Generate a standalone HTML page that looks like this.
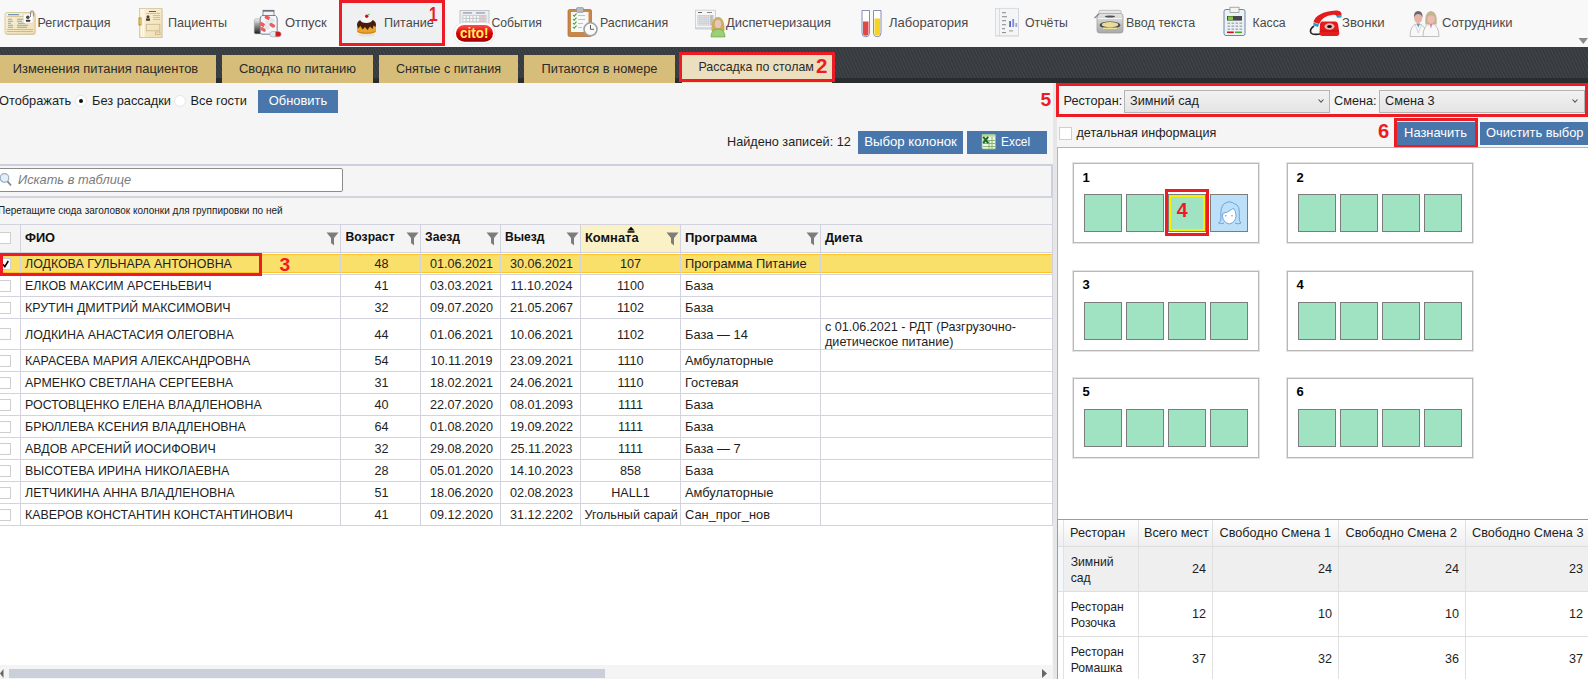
<!DOCTYPE html>
<html><head><meta charset="utf-8">
<style>
*{margin:0;padding:0;box-sizing:border-box;}
html,body{width:1588px;height:681px;overflow:hidden;background:#f5f5f5;font-family:"Liberation Sans",sans-serif;color:#1e1e1e;}
.a{position:absolute;white-space:nowrap;}
#top{position:absolute;left:0;top:0;width:1588px;height:47px;background:#f8f8f8;}
.tl{position:absolute;top:15px;font-size:12.7px;color:#4a4a4a;line-height:16px;}
#band{position:absolute;left:0;top:47px;width:1588px;height:36px;background:#35393e;
 }
#bandb{position:absolute;left:0;top:78px;width:1588px;height:5px;background:#2a2d30;}
.tab{position:absolute;top:55px;height:28px;background:#d6bd79;font-size:12.9px;color:#2a2a2a;line-height:28px;text-align:center;}
.btn{position:absolute;background:#4a77ab;color:#fff;font-size:12.9px;text-align:center;}
.red{position:absolute;border:3px solid #ed1c24;}
.rn{position:absolute;color:#ed1c24;font-weight:bold;font-size:19px;line-height:19px;}
#grid{position:absolute;left:0;top:225px;width:1053px;}
.hl{position:absolute;height:1px;background:#d3d3df;}
.vl{position:absolute;width:1px;background:#d3d3df;}
.cell{position:absolute;font-size:12.6px;line-height:15px;color:#1e1e1e;}
.hd{position:absolute;font-size:12.4px;font-weight:bold;color:#111;line-height:15px;}
.fil{position:absolute;width:12px;height:13px;}
.cb{position:absolute;width:12px;height:12px;background:#fff;border:1px solid #cfcfcf;}
.tbox{position:absolute;width:186px;height:80px;border:1px solid #b8b8b8;box-shadow:0 0 0 1px #e4e4e4;background:#fff;}
.tnum{position:absolute;left:8px;top:8px;font-size:13px;font-weight:bold;color:#000;}
.seat{position:absolute;width:38px;height:38px;background:#a0e2c2;border:1px solid #7c7c7c;}
</style></head>
<body>
<div id="top"></div>
<div class="red" style="left:339px;top:0;width:106px;height:46px;background:#eff0f2;"></div>
<div class="tl a" style="left:37.5px;font-size:12.5px">Регистрация</div>
<div class="tl a" style="left:168px;font-size:12.6px">Пациенты</div>
<div class="tl a" style="left:285px;font-size:13.0px">Отпуск</div>
<div class="tl a" style="left:384px;font-size:12.6px">Питание</div>
<div class="tl a" style="left:491.5px;font-size:12.2px">События</div>
<div class="tl a" style="left:600px;font-size:12.4px">Расписания</div>
<div class="tl a" style="left:726px;font-size:12.9px">Диспетчеризация</div>
<div class="tl a" style="left:889px;font-size:13.0px">Лаборатория</div>
<div class="tl a" style="left:1025px;font-size:12.3px">Отчёты</div>
<div class="tl a" style="left:1126px;font-size:12.5px">Ввод текста</div>
<div class="tl a" style="left:1252.5px;font-size:12.3px">Касса</div>
<div class="tl a" style="left:1342px;font-size:13.2px">Звонки</div>
<div class="tl a" style="left:1442px;font-size:13px">Сотрудники</div>
<div class="rn a" style="left:428.6px;top:4.6px;font-size:19.4px;line-height:19.4px;transform:scaleX(0.8);transform-origin:left top;">1</div>
<svg class="a" style="left:0;top:0" width="1588" height="47" viewBox="0 0 1588 47">
<defs>
<linearGradient id="gcream" x1="0" y1="0" x2="1" y2="1"><stop offset="0" stop-color="#fbf1d8"/><stop offset="1" stop-color="#f0deb0"/></linearGradient>
<linearGradient id="gred" x1="0" y1="0" x2="0" y2="1"><stop offset="0" stop-color="#ff5050"/><stop offset="0.5" stop-color="#dd0000"/><stop offset="1" stop-color="#a00000"/></linearGradient>
<linearGradient id="ggray" x1="0" y1="0" x2="0" y2="1"><stop offset="0" stop-color="#e6e6e6"/><stop offset="1" stop-color="#a8a8a8"/></linearGradient>
<linearGradient id="gblk" x1="0" y1="0" x2="0" y2="1"><stop offset="0" stop-color="#d8d8d8"/><stop offset="1" stop-color="#202020"/></linearGradient>
</defs>
<!-- 1 registration card -->
<rect x="5.5" y="13.5" width="30" height="21.5" rx="2" fill="#b9b2a4" opacity="0.6"/>
<rect x="5" y="12.5" width="30" height="21.5" rx="2" fill="url(#gcream)" stroke="#d3c294" stroke-width="0.8"/>
<rect x="8" y="14.2" width="11" height="1" fill="#4f86ad"/>
<rect x="7" y="16.3" width="26" height="0.8" fill="#cbb88c"/>
<g fill="#5f92b8" opacity="0.8"><rect x="8" y="18.8" width="4" height="0.9"/><rect x="17" y="18.8" width="6" height="0.9"/>
<rect x="8" y="20.8" width="5" height="0.9"/><rect x="17" y="20.8" width="5" height="0.9"/>
<rect x="8" y="22.8" width="3" height="0.9"/><rect x="18" y="22.8" width="7" height="0.9"/>
<rect x="8" y="24.8" width="5" height="0.9"/><rect x="17" y="24.8" width="11" height="0.9"/>
<rect x="8" y="26.8" width="5" height="0.9"/><rect x="17" y="26.8" width="10" height="0.9"/></g>
<rect x="7" y="29" width="26" height="0.9" fill="#c9b68a"/><rect x="7" y="31" width="26" height="0.9" fill="#c9b68a"/>
<rect x="23.5" y="14" width="9.5" height="9" fill="#fff" stroke="#d8d8d8" stroke-width="0.6"/>
<circle cx="27.8" cy="17.3" r="1.8" fill="#4a4a4a"/><rect x="25.8" y="19.8" width="4.6" height="2" rx="0.8" fill="#3a3a3a"/>
<path d="M30.5 17 V12.5 a1.6 1.6 0 0 1 3.2 0 V16.5" fill="none" stroke="#7c7c7c" stroke-width="0.9"/>
<!-- 2 patients doc -->
<rect x="140" y="9" width="22.5" height="29" fill="#bcb39f" opacity="0.5"/>
<rect x="139.5" y="8.5" width="22.5" height="29" fill="url(#gcream)" stroke="#d0be92" stroke-width="0.7"/>
<rect x="141.3" y="9" width="1" height="28" fill="#fff"/><rect x="143.3" y="9" width="1" height="28" fill="#fff"/>
<rect x="139" y="18" width="2" height="7" fill="none" stroke="#b8860b" stroke-width="0.9"/>
<rect x="149" y="11" width="7" height="1" fill="#6a5a40"/>
<rect x="146" y="13.2" width="14" height="0.8" fill="#c8b58c"/>
<circle cx="148" cy="16.8" r="1.5" fill="#4a4030"/><rect x="146" y="18.4" width="4" height="2.4" fill="#4a4030"/>
<g fill="#c8b58c"><rect x="153" y="15" width="7" height="0.8"/><rect x="153" y="17" width="7" height="0.8"/><rect x="153" y="19" width="7" height="0.8"/></g>
<rect x="146.3" y="24.3" width="13.5" height="6.5" fill="none" stroke="#c8b58c" stroke-width="0.8"/>
<rect x="155.5" y="32" width="4.5" height="2.6" fill="none" stroke="#c8b58c" stroke-width="0.8"/>
<!-- 3 pills -->
<linearGradient id="gcap" x1="0" y1="0" x2="0" y2="1"><stop offset="0" stop-color="#f0f0f0"/><stop offset="0.45" stop-color="#9a9a9a"/><stop offset="1" stop-color="#151515"/></linearGradient>
<rect x="254.3" y="18.8" width="7" height="15" rx="1.6" fill="url(#gcap)" stroke="#888" stroke-width="0.4"/>
<g stroke="#555" stroke-width="0.35" opacity="0.7"><path d="M255 24 H261"/><path d="M255 26 H261"/><path d="M255 28 H261"/><path d="M255 30 H261"/><path d="M255 32 H261"/></g>
<path d="M262 15.5 Q260.2 16.5 260.2 19 V32.5 Q260.2 34.2 262 34.2 H275.4 Q277.2 34.2 277.2 32.5 V19 Q277.2 16.5 275.4 15.5 Z" fill="#f4f6f8" stroke="#6c7486" stroke-width="0.9"/>
<rect x="263" y="10.3" width="11" height="5.2" fill="#f2f4f6" stroke="#6c7486" stroke-width="0.8"/>
<rect x="263" y="10.3" width="11" height="1.3" fill="#5a6270"/>
<g transform="rotate(30 268.7 25)">
<rect x="261" y="17.5" width="6" height="3.6" rx="1.8" fill="#e85c5c"/><rect x="266" y="17.5" width="6" height="3.6" rx="1.8" fill="#dde4ea"/>
<rect x="264" y="21.7" width="6" height="3.6" rx="1.8" fill="#dfe6ec"/><rect x="269" y="21.7" width="6" height="3.6" rx="1.8" fill="#e86060"/>
<rect x="260" y="25.9" width="6" height="3.6" rx="1.8" fill="#e86060"/><rect x="265" y="25.9" width="6" height="3.6" rx="1.8" fill="#dfe6ec"/>
<rect x="263" y="30" width="6" height="3.4" rx="1.7" fill="#e46464"/></g>
<rect x="269.7" y="31.5" width="11.5" height="5.3" rx="2.65" fill="#dfe8ee" stroke="#8a96a4" stroke-width="0.5"/>
<path d="M275.5 31.75 H278.5 A2.4 2.4 0 0 1 278.5 36.55 H275.5 Z" fill="#d21a1a"/>
<!-- 4 cake -->
<ellipse cx="366.5" cy="35" rx="8.5" ry="1.6" fill="#e6e2dc"/>
<path d="M357 25 Q357 22 366.5 22 Q376 22 376 25 V31 Q376 34 366.5 34 Q357 34 357 31 Z" fill="#e9a52a"/>
<path d="M357.5 31.5 Q366.5 35 375.5 31.5" fill="none" stroke="#c07810" stroke-width="0.8"/>
<path d="M357 24.5 Q357 19.2 366.5 19.2 Q376 19.2 376 24.5 L375.5 27 L373.5 25.5 L372.5 29 L370 26.5 L367.5 30 L365 27 L362.5 29.5 L360.5 26 L358 28.5 Z" fill="#4a1c0c"/>
<ellipse cx="366.3" cy="20.3" rx="5.8" ry="2.8" fill="#f6f6f6"/>
<ellipse cx="366" cy="18.6" rx="3.5" ry="1.8" fill="#fff"/>
<circle cx="366.7" cy="16.3" r="1.7" fill="#d81010"/>
<path d="M367.8 15 L369.5 14.3" stroke="#40a020" stroke-width="0.9"/>
<!-- 5 cito -->
<rect x="460" y="10.5" width="29" height="13" fill="#e8eef4" stroke="#b4b8bc" stroke-width="0.8"/>
<g fill="#7a7a7a"><rect x="463" y="12.5" width="9" height="0.9"/><rect x="476" y="12.5" width="9" height="0.9"/></g>
<rect x="462.5" y="15" width="24" height="8" fill="#c6cace"/>
<rect x="463.3" y="15.8" width="2.3" height="2.2" fill="#f6f6f6"/>
<rect x="466.7" y="15.8" width="2.3" height="2.2" fill="#f6f6f6"/>
<rect x="470.1" y="15.8" width="2.3" height="2.2" fill="#f6f6f6"/>
<rect x="473.5" y="15.8" width="2.3" height="2.2" fill="#f6f6f6"/>
<rect x="476.9" y="15.8" width="2.3" height="2.2" fill="#f6f6f6"/>
<rect x="480.3" y="15.8" width="2.3" height="2.2" fill="#f4c6ca"/>
<rect x="483.7" y="15.8" width="2.3" height="2.2" fill="#f4c6ca"/>
<rect x="463.3" y="19.0" width="2.3" height="2.2" fill="#f6f6f6"/>
<rect x="466.7" y="19.0" width="2.3" height="2.2" fill="#f6f6f6"/>
<rect x="470.1" y="19.0" width="2.3" height="2.2" fill="#f6f6f6"/>
<rect x="473.5" y="19.0" width="2.3" height="2.2" fill="#f6f6f6"/>
<rect x="476.9" y="19.0" width="2.3" height="2.2" fill="#f6f6f6"/>
<rect x="480.3" y="19.0" width="2.3" height="2.2" fill="#f4c6ca"/>
<rect x="483.7" y="19.0" width="2.3" height="2.2" fill="#f4c6ca"/>
<rect x="453.5" y="22.5" width="41.5" height="21.5" rx="10.5" fill="#fff" stroke="#e0e0e0" stroke-width="0.7"/>
<rect x="456" y="25" width="37" height="16.7" rx="8.3" fill="url(#gred)"/>
<text x="474.3" y="38" font-family="Liberation Sans" font-weight="bold" font-size="14.5" fill="#fff060" text-anchor="middle" textLength="28.5" lengthAdjust="spacingAndGlyphs">cito!</text>
<!-- 6 schedule -->
<rect x="568" y="9.5" width="23.5" height="27" rx="1.5" fill="#c8884a" stroke="#a86a30" stroke-width="0.7"/>
<rect x="571" y="12" width="17.5" height="20" fill="#f6f8fa"/>
<rect x="576.5" y="7.6" width="7" height="4.8" rx="1" fill="#b8bcc0" stroke="#888" stroke-width="0.6"/>
<g stroke="#3aa020" stroke-width="1.1" fill="none"><path d="M573 15 l1.2 1.3 l2.3 -2.6"/><path d="M573 19 l1.2 1.3 l2.3 -2.6"/><path d="M573 23 l1.2 1.3 l2.3 -2.6"/><path d="M573 27 l1.2 1.3 l2.3 -2.6"/></g>
<g fill="#b8bcc4"><rect x="578" y="15" width="7" height="0.9"/><rect x="578" y="19" width="7" height="0.9"/><rect x="578" y="23" width="5" height="0.9"/><rect x="578" y="27" width="4" height="0.9"/></g>
<circle cx="590.5" cy="29.3" r="6.5" fill="#fafafa" stroke="#a0a0a0" stroke-width="1.6"/>
<path d="M590.5 25 V29.3 H594" stroke="#333" stroke-width="0.8" fill="none"/>
<!-- 7 dispatch -->
<rect x="696" y="11" width="20" height="18.5" fill="#b8b8b8" opacity="0.5"/>
<rect x="695.5" y="10.2" width="20" height="18.5" fill="#f4f6f8" stroke="#c6cacd" stroke-width="0.8"/>
<rect x="698" y="12" width="4" height="1" fill="#666"/><rect x="707" y="12" width="5" height="1" fill="#888"/>
<rect x="697.5" y="15" width="16" height="10.5" fill="#c2c6ca"/>
<rect x="698.2" y="15.6" width="1.2" height="1.2" fill="#f8f8f8"/>
<rect x="700.3" y="15.6" width="1.2" height="1.2" fill="#f8f8f8"/>
<rect x="702.4" y="15.6" width="1.2" height="1.2" fill="#f8f8f8"/>
<rect x="704.5" y="15.6" width="1.2" height="1.2" fill="#f8f8f8"/>
<rect x="706.6" y="15.6" width="1.2" height="1.2" fill="#f8f8f8"/>
<rect x="708.7" y="15.6" width="1.2" height="1.2" fill="#f8f8f8"/>
<rect x="710.8" y="15.6" width="1.2" height="1.2" fill="#f4a0a8"/>
<rect x="698.2" y="17.6" width="1.2" height="1.2" fill="#f8f8f8"/>
<rect x="700.3" y="17.6" width="1.2" height="1.2" fill="#f8f8f8"/>
<rect x="702.4" y="17.6" width="1.2" height="1.2" fill="#f8f8f8"/>
<rect x="704.5" y="17.6" width="1.2" height="1.2" fill="#f8f8f8"/>
<rect x="706.6" y="17.6" width="1.2" height="1.2" fill="#f8f8f8"/>
<rect x="708.7" y="17.6" width="1.2" height="1.2" fill="#f8f8f8"/>
<rect x="710.8" y="17.6" width="1.2" height="1.2" fill="#f4a0a8"/>
<rect x="698.2" y="19.6" width="1.2" height="1.2" fill="#f8f8f8"/>
<rect x="700.3" y="19.6" width="1.2" height="1.2" fill="#f8f8f8"/>
<rect x="702.4" y="19.6" width="1.2" height="1.2" fill="#f8f8f8"/>
<rect x="704.5" y="19.6" width="1.2" height="1.2" fill="#f8f8f8"/>
<rect x="706.6" y="19.6" width="1.2" height="1.2" fill="#f8f8f8"/>
<rect x="708.7" y="19.6" width="1.2" height="1.2" fill="#f8f8f8"/>
<rect x="710.8" y="19.6" width="1.2" height="1.2" fill="#f4a0a8"/>
<rect x="698.2" y="21.6" width="1.2" height="1.2" fill="#f8f8f8"/>
<rect x="700.3" y="21.6" width="1.2" height="1.2" fill="#f8f8f8"/>
<rect x="702.4" y="21.6" width="1.2" height="1.2" fill="#f8f8f8"/>
<rect x="704.5" y="21.6" width="1.2" height="1.2" fill="#f8f8f8"/>
<rect x="706.6" y="21.6" width="1.2" height="1.2" fill="#f8f8f8"/>
<rect x="708.7" y="21.6" width="1.2" height="1.2" fill="#f8f8f8"/>
<rect x="710.8" y="21.6" width="1.2" height="1.2" fill="#f4a0a8"/>
<rect x="698.2" y="23.6" width="1.2" height="1.2" fill="#f8f8f8"/>
<rect x="700.3" y="23.6" width="1.2" height="1.2" fill="#f8f8f8"/>
<rect x="702.4" y="23.6" width="1.2" height="1.2" fill="#f8f8f8"/>
<rect x="704.5" y="23.6" width="1.2" height="1.2" fill="#f8f8f8"/>
<rect x="706.6" y="23.6" width="1.2" height="1.2" fill="#f8f8f8"/>
<rect x="708.7" y="23.6" width="1.2" height="1.2" fill="#f8f8f8"/>
<rect x="710.8" y="23.6" width="1.2" height="1.2" fill="#f4a0a8"/>
<rect x="696" y="27" width="19" height="1" fill="#d8dcdf"/>
<path d="M711.5 31 Q711 17.5 718 17 Q725 17.5 724.5 31 Z" fill="#c8b060"/>
<ellipse cx="718" cy="24" rx="3.2" ry="4.3" fill="#eac4b8"/>
<path d="M711 37 Q711 29 718 29 Q725 29 725 37 Z" fill="#9cd078" stroke="#60a040" stroke-width="0.6"/>
<!-- 8 lab tubes -->
<path d="M862 10.5 H869.5 V33 a3.75 3.75 0 0 1 -7.5 0 Z" fill="#fff" stroke="#7c82a4" stroke-width="0.9"/>
<path d="M863 21.5 H868.5 V33 a2.75 2.75 0 0 1 -5.5 0 Z" fill="#e04848"/>
<path d="M873.5 10.5 H881 V33 a3.75 3.75 0 0 1 -7.5 0 Z" fill="#fff" stroke="#7c82a4" stroke-width="0.9"/>
<path d="M874.5 18.5 H880 V33 a2.75 2.75 0 0 1 -5.5 0 Z" fill="#f6d420"/>
<!-- 9 reports -->
<rect x="996" y="9" width="23" height="27.5" fill="#c8c8c8" opacity="0.6"/>
<rect x="995.5" y="8.3" width="23" height="27.5" fill="#f3f5f7" stroke="#cdd1d5" stroke-width="0.7"/>
<rect x="999" y="8.5" width="0.8" height="27" fill="#d0d4d8"/>
<g fill="#7a7a7a"><rect x="1002" y="12.3" width="4" height="0.9"/><rect x="1002" y="16.3" width="5" height="0.9"/><rect x="1002" y="20.3" width="4" height="0.9"/><rect x="1002" y="24.3" width="4" height="0.9"/><rect x="1002" y="28.3" width="3" height="0.9"/><rect x="1002" y="32.2" width="4" height="0.9"/><rect x="1009" y="30.5" width="4" height="0.8"/></g>
<rect x="1009.2" y="21" width="1.8" height="6" fill="#5a66b8"/><rect x="1012.3" y="19" width="1.8" height="8" fill="#7c88d8"/><rect x="1015.4" y="23" width="1.8" height="4" fill="#9aa4e0"/>
<!-- 10 typewriter -->
<rect x="1099" y="10.3" width="22" height="4.5" rx="1.2" fill="#e8e8e8" stroke="#a0a0a0" stroke-width="0.6"/>
<rect x="1097" y="13.5" width="26" height="19.5" rx="2.5" fill="url(#ggray)" stroke="#9a9a9a" stroke-width="0.7"/>
<path d="M1094.5 18 L1099 14" stroke="#8a8a8a" stroke-width="1.3"/>
<ellipse cx="1110" cy="16.5" rx="5" ry="1.1" fill="#505050"/>
<rect x="1098" y="18" width="24" height="1" fill="#f4f4f4"/>
<ellipse cx="1110" cy="25" rx="10.5" ry="3.6" fill="#4a4a4a"/>
<ellipse cx="1110" cy="24.7" rx="8.3" ry="2.7" fill="#eadb96"/>
<rect x="1103" y="27.5" width="14" height="1.5" fill="#f0e0a0"/>
<!-- 11 cashier -->
<rect x="1224" y="9.5" width="21" height="26" rx="2" fill="#eaf2f8" stroke="#5f7c98" stroke-width="0.9"/>
<rect x="1230" y="7.2" width="9" height="5.2" fill="#f2f6ee" stroke="#8a8a8a" stroke-width="0.7"/>
<rect x="1227" y="16" width="15" height="4.6" fill="#46464e"/>
<rect x="1228" y="16.5" width="5" height="3.6" fill="#80cc30"/>
<g fill="#a8a8a8"><rect x="1227.5" y="22.5" width="2.6" height="1.4"/><rect x="1231.5" y="22.5" width="2.6" height="1.4"/><rect x="1235.5" y="22.5" width="2.6" height="1.4"/><rect x="1239.5" y="22.5" width="2.6" height="1.4"/>
<rect x="1227.5" y="25.5" width="2.6" height="1.4"/><rect x="1231.5" y="25.5" width="2.6" height="1.4"/><rect x="1235.5" y="25.5" width="2.6" height="1.4"/><rect x="1239.5" y="25.5" width="2.6" height="1.4"/>
<rect x="1227.5" y="28.5" width="2.6" height="1.4"/><rect x="1231.5" y="28.5" width="2.6" height="1.4"/><rect x="1235.5" y="28.5" width="2.6" height="1.4"/><rect x="1239.5" y="28.5" width="2.6" height="1.4"/></g>
<rect x="1227" y="31.5" width="6.8" height="1.6" fill="#d01010"/><rect x="1235" y="31.5" width="7" height="1.6" fill="#50a820"/>
<!-- 12 phone -->
<path d="M1314 26 Q1309 29.5 1311 33 Q1313.5 35.5 1322 33.5" fill="none" stroke="#222" stroke-width="1.6"/>
<path d="M1313.5 22 Q1316 12 1336 10.5 Q1340.5 10.3 1341.5 13.5 L1341.5 15.5 L1336.5 16 Q1336 14.5 1333 14.8 Q1322 16 1319 24 Z" fill="#e41c1c"/>
<path d="M1313.3 22.5 L1319.2 24.5 L1317.8 27 L1313.5 25.5 Z" fill="#1e9cd0"/>
<path d="M1336.3 15.8 L1341.6 15.2 L1341.3 17.5 L1337 17.8 Z" fill="#1e9cd0"/>
<path d="M1322 21.5 H1335.5 Q1337.5 21.5 1338 24 L1339.3 33 Q1339.3 36 1336.5 36 H1322.5 Q1319.5 36 1319.5 33 L1320 24 Q1320.5 21.5 1322 21.5 Z" fill="#e41c1c"/>
<path d="M1320 31 H1339" stroke="#b00" stroke-width="0.6"/>
<ellipse cx="1329.5" cy="26.5" rx="5" ry="3.3" fill="#f2b4b4"/><ellipse cx="1329.5" cy="26.5" rx="2.4" ry="1.5" fill="#111"/>
<!-- 13 staff -->
<path d="M1410 36.5 Q1410 24.5 1418 23.5 Q1426 24.5 1426 36.5 Z" fill="#f8f8f8" stroke="#a8a8a8" stroke-width="0.7"/>
<path d="M1416.5 23.8 L1418.3 27.5 L1420 23.8 Z" fill="#5a9cc8"/>
<path d="M1415 24.5 L1418.3 33 L1421.5 24.5" fill="none" stroke="#c0c0c0" stroke-width="0.6"/>
<ellipse cx="1418.2" cy="18.2" rx="4" ry="5" fill="#e8b4a4"/>
<path d="M1414 18 Q1413.5 11 1418.2 11 Q1423 11 1422.5 18 Q1421.5 14 1418.2 14 Q1415 14 1414 18 Z" fill="#6a6670"/>
<path d="M1423 36.5 Q1423 24.5 1431 23.5 Q1439 24.5 1439 36.5 Z" fill="#f8f8f8" stroke="#a8a8a8" stroke-width="0.7"/>
<path d="M1425.5 25 Q1424 12 1431 11 Q1438 12 1436.5 25 L1434.5 24 L1427.5 24 Z" fill="#c4b592"/>
<ellipse cx="1431" cy="18.8" rx="3.7" ry="4.8" fill="#ecbcb0"/>
<path d="M1427 17 Q1428 13.5 1431 13.5 Q1434 13.5 1435 17 Q1433 15 1431 15.5 Q1429 15 1427 17 Z" fill="#c4b592"/>
<path d="M1429.5 24 L1431 28.5 L1432.5 24 Z" fill="#d88898"/>
<!-- dropdown triangle -->
<path d="M1578.5 38 H1588 V38 L1583.3 44 Z" fill="#8a8a8a"/>
</svg>

<div id="band"></div>
<svg class="a" style="left:0;top:47px" width="1588" height="31" viewBox="0 0 1588 31"><defs><pattern id="strp" width="3" height="40" patternUnits="userSpaceOnUse" patternTransform="rotate(-25)"><rect x="0" y="0" width="1.1" height="40" fill="#41464c"/></pattern></defs><rect x="0" y="0" width="1588" height="31" fill="url(#strp)"/></svg>
<div id="bandb"></div>
<div class="tab" style="left:0px;width:216px;font-size:12.92px;padding-right:5px;">Изменения питания пациентов</div>
<div class="tab" style="left:222px;width:151px;font-size:13.04px;">Сводка по питанию</div>
<div class="tab" style="left:379px;width:139px;font-size:12.56px;">Снятые с питания</div>
<div class="tab" style="left:524px;width:151px;font-size:12.82px;">Питаются в номере</div>
<div class="tab" style="left:682px;width:150px;background:#ebdfbf;"></div><div class="a" style="left:698.5px;top:58.5px;font-size:12.4px;line-height:16px;color:#2a2a2a;">Рассадка по столам</div>
<div class="red" style="left:679px;top:52px;width:156px;height:30px;"></div>
<div class="rn a" style="left:816.2px;top:57px;font-size:19.4px;line-height:19.4px;transform:scaleX(1.06);transform-origin:left top;">2</div>
<div class="a" style="left:-1px;top:93px;font-size:12.8px;line-height:16px;">Отображать</div>
<div class="a" style="left:75px;top:95px;width:12px;height:12px;border-radius:50%;background:#fff;border:1px solid #e6e6e6;"><div style="position:absolute;left:3px;top:3px;width:4px;height:4px;border-radius:50%;background:#111;"></div></div>
<div class="a" style="left:92px;top:93px;font-size:12.8px;line-height:16px;">Без рассадки</div>
<div class="a" style="left:174px;top:95px;width:12px;height:12px;border-radius:50%;background:#fff;border:1px solid #e6e6e6;"></div>
<div class="a" style="left:190.5px;top:93px;font-size:12.8px;line-height:16px;">Все гости</div>
<div class="btn" style="left:258px;top:90px;width:80px;height:23px;line-height:22px;">Обновить</div>
<div class="a" style="left:727px;top:133.5px;font-size:12.7px;line-height:16px;">Найдено записей: 12</div>
<div class="btn" style="left:858px;top:131px;width:105px;height:23px;line-height:21.5px;font-size:13.2px;">Выбор колонок</div>
<div class="btn" style="left:967px;top:131px;width:80px;height:23px;line-height:23px;"></div>
<div class="a" style="left:1001px;top:133.5px;color:#fff;font-size:11.9px;line-height:16px;">Excel</div>
<svg class="a" style="left:980px;top:133px" width="17" height="17" viewBox="0 0 17 17"><path d="M2 2.5 Q2 1.5 3 1.5 H14 Q15.5 1.5 15.5 3 V15 Q15.5 16 14.5 16 H3 Q2 16 2 15 Z" fill="#eef6e6" stroke="#8cb87a" stroke-width="0.8"/><g stroke="#7cb06a" stroke-width="0.9"><path d="M3 7.5 H15"/><path d="M3 10.5 H15"/><path d="M3 13.5 H15"/><path d="M9 7 V15.5"/><path d="M12 4 V15.5"/></g><rect x="2" y="1.5" width="13.5" height="2.2" fill="#b8d8a4"/><path d="M3.2 3.8 L8.2 10.2 M8.2 3.8 L3.2 10.2" stroke="#1f6a28" stroke-width="2"/></svg>
<div class="a" style="left:0;top:164px;width:1053px;height:2px;background:#cdd0dc;"></div>
<div class="a" style="left:1051px;top:164px;width:2px;height:34px;background:#cdd0dc;"></div><div class="a" style="left:1052px;top:198px;width:1px;height:27px;background:#d2d4e0;"></div>
<div class="a" style="left:-3px;top:168px;width:346px;height:24px;background:#fff;border:1px solid #8c8c8c;border-radius:2px;"></div>
<svg class="a" style="left:0;top:172px" width="14" height="16" viewBox="0 0 14 16"><circle cx="4.5" cy="6" r="4.3" fill="#e4eef6" stroke="#9ab0c4" stroke-width="1.2"/><path d="M7.5 9.3 L11 13.5" stroke="#888" stroke-width="1.8"/></svg>
<div class="a" style="left:18px;top:172px;font-size:12.8px;font-style:italic;color:#7b7b7b;line-height:16px;">Искать в таблице</div>
<div class="a" style="left:0;top:196px;width:1053px;height:2px;background:#d2d4e0;"></div>
<div class="a" style="left:-2px;top:204.5px;font-size:10px;color:#222;line-height:12px;">Перетащите сюда заголовок колонки для группировки по ней</div>
<div class="a" style="left:0;top:225px;width:1052px;height:28px;background:#f4f4f4;"></div>
<div class="a" style="left:581px;top:225px;width:99px;height:27px;background:#faf1c6;"></div>
<div class="a" style="left:0;top:253px;width:1052px;height:412px;background:#fff;"></div>
<div class="a" style="left:0;top:254px;width:1052px;height:19px;background:#f9e06a;border-top:1px solid #fdc327;border-bottom:1px solid #fdc327;"></div>
<div class="hl" style="left:0;top:224px;width:1052px;"></div>
<div class="hl" style="left:0;top:252px;width:1052px;"></div>
<div class="hl" style="left:0;top:274px;width:1052px;"></div>
<div class="hl" style="left:0;top:296px;width:1052px;"></div>
<div class="hl" style="left:0;top:318px;width:1052px;"></div>
<div class="hl" style="left:0;top:349px;width:1052px;"></div>
<div class="hl" style="left:0;top:371px;width:1052px;"></div>
<div class="hl" style="left:0;top:393px;width:1052px;"></div>
<div class="hl" style="left:0;top:415px;width:1052px;"></div>
<div class="hl" style="left:0;top:437px;width:1052px;"></div>
<div class="hl" style="left:0;top:459px;width:1052px;"></div>
<div class="hl" style="left:0;top:481px;width:1052px;"></div>
<div class="hl" style="left:0;top:503px;width:1052px;"></div>
<div class="hl" style="left:0;top:525px;width:1052px;"></div>
<div class="vl" style="left:20px;top:224px;height:302px;"></div>
<div class="vl" style="left:340px;top:224px;height:302px;"></div>
<div class="vl" style="left:420px;top:224px;height:302px;"></div>
<div class="vl" style="left:500px;top:224px;height:302px;"></div>
<div class="vl" style="left:580px;top:224px;height:302px;"></div>
<div class="vl" style="left:680px;top:224px;height:302px;"></div>
<div class="vl" style="left:820px;top:224px;height:302px;"></div>
<div class="vl" style="left:1052px;top:224px;height:302px;"></div>
<div class="hd a" style="left:25px;top:229.5px;font-size:12.8px;">ФИО</div>
<div class="hd a" style="left:345.5px;top:230px;font-size:12.2px;">Возраст</div>
<div class="hd a" style="left:425px;top:230px;font-size:12.2px;">Заезд</div>
<div class="hd a" style="left:505px;top:230px;font-size:12.1px;">Выезд</div>
<div class="hd a" style="left:585px;top:229.5px;font-size:12.9px;">Комната</div>
<div class="hd a" style="left:685px;top:229.5px;font-size:13px;">Программа</div>
<div class="hd a" style="left:825px;top:229.5px;font-size:12.8px;">Диета</div>
<svg class="a" style="left:326px;top:232px" width="13" height="14" viewBox="0 0 13 14"><path d="M0.5 0.5 H12.5 L8 6 V13.5 L5 11 V6 Z" fill="#7d7d7d"/></svg>
<svg class="a" style="left:406px;top:232px" width="13" height="14" viewBox="0 0 13 14"><path d="M0.5 0.5 H12.5 L8 6 V13.5 L5 11 V6 Z" fill="#7d7d7d"/></svg>
<svg class="a" style="left:486px;top:232px" width="13" height="14" viewBox="0 0 13 14"><path d="M0.5 0.5 H12.5 L8 6 V13.5 L5 11 V6 Z" fill="#7d7d7d"/></svg>
<svg class="a" style="left:566px;top:232px" width="13" height="14" viewBox="0 0 13 14"><path d="M0.5 0.5 H12.5 L8 6 V13.5 L5 11 V6 Z" fill="#7d7d7d"/></svg>
<svg class="a" style="left:666px;top:232px" width="13" height="14" viewBox="0 0 13 14"><path d="M0.5 0.5 H12.5 L8 6 V13.5 L5 11 V6 Z" fill="#7d7d7d"/></svg>
<svg class="a" style="left:806px;top:232px" width="13" height="14" viewBox="0 0 13 14"><path d="M0.5 0.5 H12.5 L8 6 V13.5 L5 11 V6 Z" fill="#7d7d7d"/></svg>
<svg class="a" style="left:627px;top:226px" width="8" height="8" viewBox="0 0 8 8"><path d="M4 0.8 L7.5 4.6 H0.5 Z" fill="#000"/><rect x="0.5" y="5.2" width="7" height="1.5" fill="#000"/></svg>
<div class="cb" style="left:-1px;top:232px;"></div>
<div class="cb" style="left:-1px;top:257.5px;"></div>
<div class="cell a" style="left:25px;font-size:12.4px;top:257.0px;">ЛОДКОВА ГУЛЬНАРА АНТОНОВНА</div>
<div class="cell a" style="left:342px;width:79px;text-align:center;top:257.0px;">48</div>
<div class="cell a" style="left:422px;width:79px;text-align:center;top:257.0px;">01.06.2021</div>
<div class="cell a" style="left:502px;width:79px;text-align:center;top:257.0px;">30.06.2021</div>
<div class="cell a" style="left:581px;width:99px;text-align:center;top:257.0px;overflow:hidden;">107</div>
<div class="cell a" style="left:685px;font-size:12.86px;top:256.2px;">Программа Питание</div>
<div class="cb" style="left:-1px;top:279.5px;"></div>
<div class="cell a" style="left:25px;font-size:12.4px;top:279.0px;">ЕЛКОВ МАКСИМ АРСЕНЬЕВИЧ</div>
<div class="cell a" style="left:342px;width:79px;text-align:center;top:279.0px;">41</div>
<div class="cell a" style="left:422px;width:79px;text-align:center;top:279.0px;">03.03.2021</div>
<div class="cell a" style="left:502px;width:79px;text-align:center;top:279.0px;">11.10.2024</div>
<div class="cell a" style="left:581px;width:99px;text-align:center;top:279.0px;overflow:hidden;">1100</div>
<div class="cell a" style="left:685px;font-size:12.86px;top:278.2px;">База</div>
<div class="cb" style="left:-1px;top:301.5px;"></div>
<div class="cell a" style="left:25px;font-size:12.4px;top:301.0px;">КРУТИН ДМИТРИЙ МАКСИМОВИЧ</div>
<div class="cell a" style="left:342px;width:79px;text-align:center;top:301.0px;">32</div>
<div class="cell a" style="left:422px;width:79px;text-align:center;top:301.0px;">09.07.2020</div>
<div class="cell a" style="left:502px;width:79px;text-align:center;top:301.0px;">21.05.2067</div>
<div class="cell a" style="left:581px;width:99px;text-align:center;top:301.0px;overflow:hidden;">1102</div>
<div class="cell a" style="left:685px;font-size:12.86px;top:300.2px;">База</div>
<div class="cb" style="left:-1px;top:328.0px;"></div>
<div class="cell a" style="left:25px;font-size:12.4px;top:327.5px;">ЛОДКИНА АНАСТАСИЯ ОЛЕГОВНА</div>
<div class="cell a" style="left:342px;width:79px;text-align:center;top:327.5px;">44</div>
<div class="cell a" style="left:422px;width:79px;text-align:center;top:327.5px;">01.06.2021</div>
<div class="cell a" style="left:502px;width:79px;text-align:center;top:327.5px;">10.06.2021</div>
<div class="cell a" style="left:581px;width:99px;text-align:center;top:327.5px;overflow:hidden;">1102</div>
<div class="cell a" style="left:685px;font-size:12.86px;top:326.7px;">База — 14</div>
<div class="cell a" style="left:825px;top:320px;line-height:14.5px;">с 01.06.2021 - РДТ (Разгрузочно-<br>диетическое питание)</div>
<div class="cb" style="left:-1px;top:354.5px;"></div>
<div class="cell a" style="left:25px;font-size:12.4px;top:354.0px;">КАРАСЕВА МАРИЯ АЛЕКСАНДРОВНА</div>
<div class="cell a" style="left:342px;width:79px;text-align:center;top:354.0px;">54</div>
<div class="cell a" style="left:422px;width:79px;text-align:center;top:354.0px;">10.11.2019</div>
<div class="cell a" style="left:502px;width:79px;text-align:center;top:354.0px;">23.09.2021</div>
<div class="cell a" style="left:581px;width:99px;text-align:center;top:354.0px;overflow:hidden;">1110</div>
<div class="cell a" style="left:685px;font-size:12.86px;top:353.2px;">Амбулаторные</div>
<div class="cb" style="left:-1px;top:376.5px;"></div>
<div class="cell a" style="left:25px;font-size:12.4px;top:376.0px;">АРМЕНКО СВЕТЛАНА СЕРГЕЕВНА</div>
<div class="cell a" style="left:342px;width:79px;text-align:center;top:376.0px;">31</div>
<div class="cell a" style="left:422px;width:79px;text-align:center;top:376.0px;">18.02.2021</div>
<div class="cell a" style="left:502px;width:79px;text-align:center;top:376.0px;">24.06.2021</div>
<div class="cell a" style="left:581px;width:99px;text-align:center;top:376.0px;overflow:hidden;">1110</div>
<div class="cell a" style="left:685px;font-size:12.86px;top:375.2px;">Гостевая</div>
<div class="cb" style="left:-1px;top:398.5px;"></div>
<div class="cell a" style="left:25px;font-size:12.4px;top:398.0px;">РОСТОВЦЕНКО ЕЛЕНА ВЛАДЛЕНОВНА</div>
<div class="cell a" style="left:342px;width:79px;text-align:center;top:398.0px;">40</div>
<div class="cell a" style="left:422px;width:79px;text-align:center;top:398.0px;">22.07.2020</div>
<div class="cell a" style="left:502px;width:79px;text-align:center;top:398.0px;">08.01.2093</div>
<div class="cell a" style="left:581px;width:99px;text-align:center;top:398.0px;overflow:hidden;">1111</div>
<div class="cell a" style="left:685px;font-size:12.86px;top:397.2px;">База</div>
<div class="cb" style="left:-1px;top:420.5px;"></div>
<div class="cell a" style="left:25px;font-size:12.4px;top:420.0px;">БРЮЛЛЕВА КСЕНИЯ ВЛАДЛЕНОВНА</div>
<div class="cell a" style="left:342px;width:79px;text-align:center;top:420.0px;">64</div>
<div class="cell a" style="left:422px;width:79px;text-align:center;top:420.0px;">01.08.2020</div>
<div class="cell a" style="left:502px;width:79px;text-align:center;top:420.0px;">19.09.2022</div>
<div class="cell a" style="left:581px;width:99px;text-align:center;top:420.0px;overflow:hidden;">1111</div>
<div class="cell a" style="left:685px;font-size:12.86px;top:419.2px;">База</div>
<div class="cb" style="left:-1px;top:442.5px;"></div>
<div class="cell a" style="left:25px;font-size:12.4px;top:442.0px;">АВДОВ АРСЕНИЙ ИОСИФОВИЧ</div>
<div class="cell a" style="left:342px;width:79px;text-align:center;top:442.0px;">32</div>
<div class="cell a" style="left:422px;width:79px;text-align:center;top:442.0px;">29.08.2020</div>
<div class="cell a" style="left:502px;width:79px;text-align:center;top:442.0px;">25.11.2023</div>
<div class="cell a" style="left:581px;width:99px;text-align:center;top:442.0px;overflow:hidden;">1111</div>
<div class="cell a" style="left:685px;font-size:12.86px;top:441.2px;">База — 7</div>
<div class="cb" style="left:-1px;top:464.5px;"></div>
<div class="cell a" style="left:25px;font-size:12.4px;top:464.0px;">ВЫСОТЕВА ИРИНА НИКОЛАЕВНА</div>
<div class="cell a" style="left:342px;width:79px;text-align:center;top:464.0px;">28</div>
<div class="cell a" style="left:422px;width:79px;text-align:center;top:464.0px;">05.01.2020</div>
<div class="cell a" style="left:502px;width:79px;text-align:center;top:464.0px;">14.10.2023</div>
<div class="cell a" style="left:581px;width:99px;text-align:center;top:464.0px;overflow:hidden;">858</div>
<div class="cell a" style="left:685px;font-size:12.86px;top:463.2px;">База</div>
<div class="cb" style="left:-1px;top:486.5px;"></div>
<div class="cell a" style="left:25px;font-size:12.4px;top:486.0px;">ЛЕТЧИКИНА АННА ВЛАДЛЕНОВНА</div>
<div class="cell a" style="left:342px;width:79px;text-align:center;top:486.0px;">51</div>
<div class="cell a" style="left:422px;width:79px;text-align:center;top:486.0px;">18.06.2020</div>
<div class="cell a" style="left:502px;width:79px;text-align:center;top:486.0px;">02.08.2023</div>
<div class="cell a" style="left:581px;width:99px;text-align:center;top:486.0px;overflow:hidden;">HALL1</div>
<div class="cell a" style="left:685px;font-size:12.86px;top:485.2px;">Амбулаторные</div>
<div class="cb" style="left:-1px;top:508.5px;"></div>
<div class="cell a" style="left:25px;font-size:12.4px;top:508.0px;">КАВЕРОВ КОНСТАНТИН КОНСТАНТИНОВИЧ</div>
<div class="cell a" style="left:342px;width:79px;text-align:center;top:508.0px;">41</div>
<div class="cell a" style="left:422px;width:79px;text-align:center;top:508.0px;">09.12.2020</div>
<div class="cell a" style="left:502px;width:79px;text-align:center;top:508.0px;">31.12.2202</div>
<div class="cell a" style="left:581px;width:99px;text-align:left;padding-left:3.5px;top:508.0px;overflow:hidden;">Угольный сарай</div>
<div class="cell a" style="left:685px;font-size:12.86px;top:507.2px;">Сан_прог_нов</div>
<svg class="a" style="left:2px;top:260px" width="7" height="8" viewBox="0 0 7 8"><path d="M0.8 4.2 L2.8 6.6 L6.3 1" fill="none" stroke="#000" stroke-width="1.6"/></svg>
<div class="red" style="left:0;top:253px;width:262px;height:23px;"></div>
<div class="rn a" style="left:279.6px;top:255px;font-size:19.2px;line-height:19.2px;">3</div>
<div class="a" style="left:0;top:665px;width:1052px;height:14px;background:#f4f4f4;"></div>
<div class="a" style="left:9px;top:669px;width:596px;height:9px;background:#cbcedb;"></div>
<svg class="a" style="left:0;top:669px" width="4" height="9" viewBox="0 0 4 9"><path d="M3.5 0 V9 L0 4.5 Z" fill="#666"/></svg>
<svg class="a" style="left:1042px;top:669px" width="5" height="9" viewBox="0 0 5 9"><path d="M0 0 V9 L5 4.5 Z" fill="#666"/></svg>
<div class="a" style="left:0;top:679px;width:1052px;height:2px;background:#fff;"></div>
<div class="a" style="left:1053px;top:83px;width:4px;height:598px;background:#e6e6e6;"></div>
<div class="a" style="left:1063.5px;top:92.5px;font-size:12.7px;line-height:16px;">Ресторан:</div>
<div class="a" style="left:1124px;top:89.8px;width:206px;height:23px;border:1px solid #b4b4b4;background:linear-gradient(#f2f2f2,#e4e4e4);"></div>
<div class="a" style="left:1130px;top:92.5px;font-size:12.7px;line-height:16px;">Зимний сад</div>
<div class="a" style="left:1334px;top:92.5px;font-size:12.7px;line-height:16px;">Смена:</div>
<div class="a" style="left:1379px;top:89.8px;width:206px;height:23px;border:1px solid #b4b4b4;background:linear-gradient(#f2f2f2,#e4e4e4);"></div>
<div class="a" style="left:1385px;top:92.5px;font-size:12.7px;line-height:16px;">Смена 3</div>
<svg class="a" style="left:1317px;top:98px" width="8" height="6" viewBox="0 0 8 6"><path d="M1.5 1.5 L4 4.2 L6.5 1.5" fill="none" stroke="#555" stroke-width="1.1"/></svg>
<svg class="a" style="left:1571px;top:98px" width="8" height="6" viewBox="0 0 8 6"><path d="M1.5 1.5 L4 4.2 L6.5 1.5" fill="none" stroke="#555" stroke-width="1.1"/></svg>
<div class="red" style="left:1056px;top:83px;width:532px;height:34px;"></div>
<div class="rn a" style="left:1040.6px;top:90px;font-size:19.2px;line-height:19.2px;">5</div>
<div class="cb" style="left:1059px;top:127px;width:13px;height:13px;"></div>
<div class="a" style="left:1076.5px;top:124.5px;font-size:12.6px;line-height:16px;">детальная информация</div>
<div class="btn" style="left:1396px;top:122px;width:79px;height:22.5px;line-height:22px;">Назначить</div>
<div class="red" style="left:1393.5px;top:118px;width:84.5px;height:29.5px;"></div>
<div class="rn a" style="left:1377.6px;top:122px;font-size:19.4px;line-height:19.4px;transform:scaleX(1.04);transform-origin:left top;">6</div>
<div class="btn" style="left:1480px;top:122px;width:110px;height:22.5px;line-height:22px;text-align:left;padding-left:6px;">Очистить выбор</div>
<div class="a" style="left:1057px;top:147px;width:531px;height:534px;background:#fff;border-top:1px solid #b4b4b4;border-left:1px solid #b4b4b4;"></div>
<div class="tbox" style="left:1073px;top:163px;"><div class="tnum a" style="left:8.5px;top:6px;">1</div>
<div class="seat" style="left:10px;top:30px;background:#a0e3c3;"></div>
<div class="seat" style="left:52px;top:30px;background:#a0e3c3;"></div>
<div class="seat" style="left:94px;top:30px;background:#a0e3c3;"></div>
<div class="seat" style="left:136px;top:30px;background:#bde0f8;"></div>
</div>
<div class="tbox" style="left:1287px;top:163px;"><div class="tnum a" style="left:8.5px;top:6px;">2</div>
<div class="seat" style="left:10px;top:30px;background:#a0e3c3;"></div>
<div class="seat" style="left:52px;top:30px;background:#a0e3c3;"></div>
<div class="seat" style="left:94px;top:30px;background:#a0e3c3;"></div>
<div class="seat" style="left:136px;top:30px;background:#a0e3c3;"></div>
</div>
<div class="tbox" style="left:1073px;top:271px;"><div class="tnum a" style="left:8.5px;top:5.3px;">3</div>
<div class="seat" style="left:10px;top:30px;background:#a0e3c3;"></div>
<div class="seat" style="left:52px;top:30px;background:#a0e3c3;"></div>
<div class="seat" style="left:94px;top:30px;background:#a0e3c3;"></div>
<div class="seat" style="left:136px;top:30px;background:#a0e3c3;"></div>
</div>
<div class="tbox" style="left:1287px;top:271px;"><div class="tnum a" style="left:8.5px;top:5.3px;">4</div>
<div class="seat" style="left:10px;top:30px;background:#a0e3c3;"></div>
<div class="seat" style="left:52px;top:30px;background:#a0e3c3;"></div>
<div class="seat" style="left:94px;top:30px;background:#a0e3c3;"></div>
<div class="seat" style="left:136px;top:30px;background:#a0e3c3;"></div>
</div>
<div class="tbox" style="left:1073px;top:378px;"><div class="tnum a" style="left:8.5px;top:5.3px;">5</div>
<div class="seat" style="left:10px;top:30px;background:#a0e3c3;"></div>
<div class="seat" style="left:52px;top:30px;background:#a0e3c3;"></div>
<div class="seat" style="left:94px;top:30px;background:#a0e3c3;"></div>
<div class="seat" style="left:136px;top:30px;background:#a0e3c3;"></div>
</div>
<div class="tbox" style="left:1287px;top:378px;"><div class="tnum a" style="left:8.5px;top:5.3px;">6</div>
<div class="seat" style="left:10px;top:30px;background:#a0e3c3;"></div>
<div class="seat" style="left:52px;top:30px;background:#a0e3c3;"></div>
<div class="seat" style="left:94px;top:30px;background:#a0e3c3;"></div>
<div class="seat" style="left:136px;top:30px;background:#a0e3c3;"></div>
</div>
<div class="a" style="left:1169px;top:195px;width:36px;height:36px;border:2px solid #f6f000;"></div>
<div class="red" style="left:1165px;top:189px;width:44px;height:47px;"></div>
<div class="rn a" style="left:1176.7px;top:200.8px;font-size:19.7px;line-height:19.7px;">4</div>
<svg class="a" style="left:1211px;top:195px" width="36" height="36" viewBox="0 0 36 36"><path d="M7.5 28 Q10.5 26.5 10 22 Q9 12 13.5 8.5 Q17.5 5.5 21.5 7.5 Q23.5 9 25.5 9.5 Q28.5 12 28.3 17 Q28 23 28.5 25.5 Q29.5 27.5 30 28 Q27 29.8 24 28" fill="none" stroke="#5c9cdc" stroke-width="0.9"/><path d="M7.5 28 Q10 29.5 13 28" fill="none" stroke="#5c9cdc" stroke-width="0.9"/><path d="M11.8 18.5 Q16.5 17.5 20.5 14.5 Q22 13 23 13.8 Q25 16 25 21 Q25 27 18.5 29 Q12 27.5 11.6 21.5 Z" fill="#fff" stroke="#5c9cdc" stroke-width="0.9"/><circle cx="14.8" cy="20.8" r="0.8" fill="#5c9cdc"/><circle cx="21" cy="20.8" r="0.8" fill="#5c9cdc"/></svg>
<div class="a" style="left:1057px;top:519px;width:531px;height:162px;background:#fff;border-top:1px solid #8da0b4;border-left:1px solid #8da0b4;"></div>
<div class="a" style="left:1058px;top:520px;width:530px;height:26px;background:linear-gradient(#ffffff,#eeeef0);"></div>
<div class="a" style="left:1064px;top:546px;width:524px;height:45px;background:#efefef;"></div>
<div class="a" style="left:1058px;top:546px;width:6px;height:46px;border:1px solid #a8d8f4;border-left:none;background:#f2f8fc;"></div>
<div class="vl" style="left:1138px;top:520px;height:161px;background:#e0e0e0;"></div>
<div class="vl" style="left:1212px;top:520px;height:161px;background:#e0e0e0;"></div>
<div class="vl" style="left:1338px;top:520px;height:161px;background:#e0e0e0;"></div>
<div class="vl" style="left:1465px;top:520px;height:161px;background:#e0e0e0;"></div>
<div class="vl" style="left:1063px;top:520px;height:159px;background:#e2e2e2;"></div>
<div class="hl" style="left:1058px;top:546px;width:530px;background:#dedede;"></div>
<div class="hl" style="left:1058px;top:591px;width:530px;background:#dedede;"></div>
<div class="hl" style="left:1058px;top:636px;width:530px;background:#dedede;"></div>
<div class="cell a" style="left:1070px;top:525.5px;font-size:12.7px;">Ресторан</div>
<div class="cell a" style="left:1144px;top:525.5px;font-size:12.7px;">Всего мест</div>
<div class="cell a" style="left:1219.5px;top:525.5px;font-size:12.7px;">Свободно Смена 1</div>
<div class="cell a" style="left:1345.5px;top:525.5px;font-size:12.7px;">Свободно Смена 2</div>
<div class="cell a" style="left:1472px;top:525.5px;font-size:12.7px;">Свободно Смена 3</div>
<div class="cell a" style="left:1070.7px;top:553.5px;line-height:16px;font-size:12.2px;">Зимний<br>сад</div>
<div class="cell a" style="left:1138px;width:68px;text-align:right;top:562px;">24</div>
<div class="cell a" style="left:1212px;width:120px;text-align:right;top:562px;">24</div>
<div class="cell a" style="left:1338px;width:121px;text-align:right;top:562px;">24</div>
<div class="cell a" style="left:1465px;width:118px;text-align:right;top:561.9px;">23</div>
<div class="cell a" style="left:1070.7px;top:598.5px;line-height:16px;font-size:12.2px;">Ресторан<br>Розочка</div>
<div class="cell a" style="left:1138px;width:68px;text-align:right;top:607px;">12</div>
<div class="cell a" style="left:1212px;width:120px;text-align:right;top:607px;">10</div>
<div class="cell a" style="left:1338px;width:121px;text-align:right;top:607px;">10</div>
<div class="cell a" style="left:1465px;width:118px;text-align:right;top:606.9px;">12</div>
<div class="cell a" style="left:1070.7px;top:643.5px;line-height:16px;font-size:12.2px;">Ресторан<br>Ромашка</div>
<div class="cell a" style="left:1138px;width:68px;text-align:right;top:652px;">37</div>
<div class="cell a" style="left:1212px;width:120px;text-align:right;top:652px;">32</div>
<div class="cell a" style="left:1338px;width:121px;text-align:right;top:652px;">36</div>
<div class="cell a" style="left:1465px;width:118px;text-align:right;top:651.9px;">37</div>
<div class="a" style="left:1053px;top:679px;width:535px;height:2px;background:#fff;"></div>
</body></html>
